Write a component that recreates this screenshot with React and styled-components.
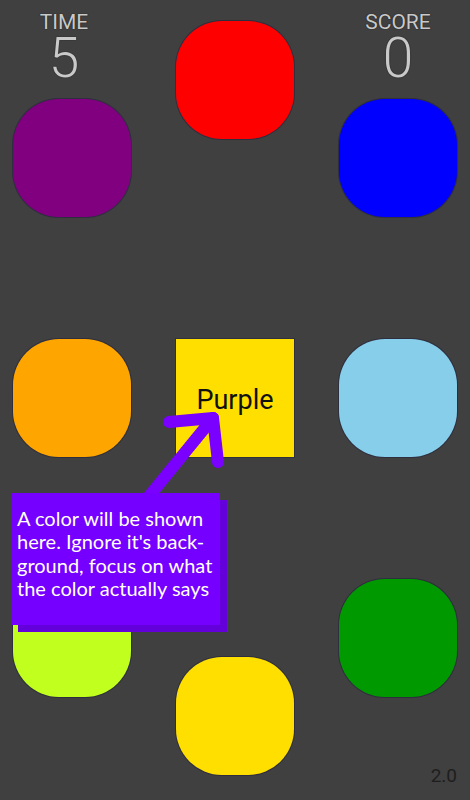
import React from 'react';
import styled, { createGlobalStyle } from 'styled-components';

const GlobalStyle = createGlobalStyle`
  html, body {
    margin: 0;
    padding: 0;
    background: #404040;
  }
`;

const Board = styled.div`
  position: relative;
  width: 470px;
  height: 800px;
  overflow: hidden;
  background: #404040;
  display: grid;
  grid-template-columns: 118px 118px 118px;
  column-gap: 45px;
  padding: 0 13px;
  box-sizing: border-box;
  font-family: Roboto, "Liberation Sans", sans-serif;
`;

const Column = styled.div`
  display: flex;
  flex-direction: column;
  padding-top: ${(p) => p.$top}px;
  height: 800px;
  box-sizing: border-box;
`;

const Stack = styled.div`
  display: flex;
  flex-direction: column;
  gap: ${(p) => p.$gap}px;
`;

const Stat = styled.div`
  height: 87px;
  display: flex;
  flex-direction: column;
  align-items: center;
  padding-right: ${(p) => p.$shift || 0}px;
  color: #c9c9c9;
  text-shadow: 0 0 1px #222, 0 0 1px #222;
`;

const StatLabel = styled.div`
  font-size: 21px;
  line-height: 1;
`;

const StatValue = styled.div`
  font-size: 55px;
  font-weight: 300;
  line-height: 44px;
  margin-top: 3px;
`;

const ColorButton = styled.div`
  width: 118px;
  height: 118px;
  border-radius: 46px;
  background: ${(p) => p.$color};
  box-shadow: 0 0 0 1px rgba(25, 25, 60, 0.45);
  flex-shrink: 0;
`;

const Prompt = styled.div`
  width: 118px;
  height: 118px;
  background: #ffdf00;
  box-shadow: 0 0 0 1px rgba(25, 25, 60, 0.4);
  display: flex;
  align-items: center;
  justify-content: center;
  font-size: 27px;
  color: #111;
  padding-top: 4px;
  box-sizing: border-box;
  flex-shrink: 0;
`;

const Version = styled.div`
  margin-top: auto;
  padding-bottom: 15px;
  text-align: right;
  font-size: 19px;
  line-height: 1;
  color: #1e1e1e;
`;

const Arrow = styled.svg`
  position: absolute;
  left: 0;
  top: 0;
  pointer-events: none;
`;

const Hint = styled.div`
  position: absolute;
  left: 11px;
  top: 493px;
  width: 209px;
  height: 132px;
  box-sizing: border-box;
  padding: 14px 0 0 6px;
  background: #7500ff;
  box-shadow: 7px 7px 0 #6400da;
  color: #fff;
  font-family: Lato, "Open Sans", sans-serif;
  font-size: 20px;
  line-height: 23.3px;
  white-space: nowrap;
`;

export default function App() {
  return (
    <>
      <GlobalStyle />
      <Board>
        <Column $top={12}>
          <Stat $shift={16}>
            <StatLabel>TIME</StatLabel>
            <StatValue>5</StatValue>
          </Stat>
          <Stack $gap={122}>
            <ColorButton $color="#800080" />
            <ColorButton $color="#ffa500" />
            <ColorButton $color="#c0ff1e" />
          </Stack>
        </Column>
        <Column $top={21}>
          <Stack $gap={200}>
            <ColorButton $color="#ff0000" />
            <Prompt>Purple</Prompt>
            <ColorButton $color="#ffdf00" />
          </Stack>
        </Column>
        <Column $top={12}>
          <Stat $shift={-4}>
            <StatLabel>SCORE</StatLabel>
            <StatValue>0</StatValue>
          </Stat>
          <Stack $gap={122}>
            <ColorButton $color="#0000ff" />
            <ColorButton $color="#87ceeb" />
            <ColorButton $color="#009900" />
          </Stack>
          <Version>2.0</Version>
        </Column>

        <Arrow width="470" height="800" viewBox="0 0 470 800">
          <g stroke="#7a00ff" strokeWidth="12" strokeLinecap="round" strokeLinejoin="round" fill="none">
            <path d="M169 422 L213 418 L218 462" />
            <path d="M213 418 L146 500" />
          </g>
        </Arrow>

        <Hint>
          A color will be shown<br />
          here. Ignore it's back-<br />
          ground, focus on what<br />
          the color actually says
        </Hint>
      </Board>
    </>
  );
}
